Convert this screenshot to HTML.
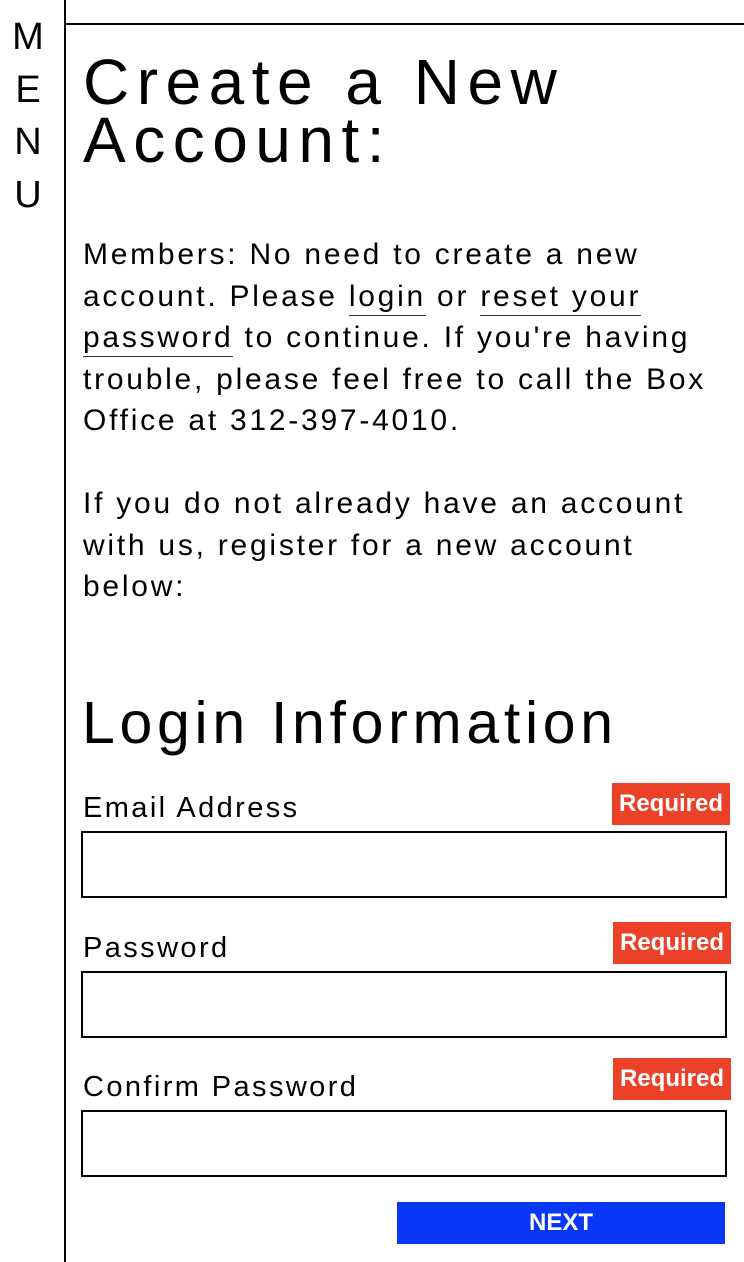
<!DOCTYPE html>
<html><head><meta charset="utf-8"><style>
*{margin:0;padding:0;box-sizing:border-box}
body{width:744px;height:1262px;background:#fff;position:relative;overflow:hidden;font-family:"Liberation Sans","DejaVu Sans",sans-serif;color:#000}
.a{position:absolute;white-space:nowrap}
.vl{left:64px;top:0;width:2px;height:1262px;background:#000}
.hl{left:64px;top:23px;width:680px;height:2px;background:#000}
.menu{left:8px;width:40px;text-align:center;font-size:38px;font-weight:300;line-height:38px}
.t{left:83px;font-size:64px;line-height:58px;letter-spacing:7.5px}
.p{left:83px;font-size:30px;line-height:41.5px;letter-spacing:2.75px}
.u{border-bottom:1px solid #333;padding-bottom:2px}
.lbl{left:83px;font-size:29px;letter-spacing:2.4px}
.req{background:#ea4128;color:#fff;font-weight:bold;font-size:24px;height:42px;line-height:42px;width:118px;text-align:center}
.in{left:81px;width:646px;height:67px;border:2px solid #000}
</style></head><body>
<div class="a vl"></div><div class="a hl"></div>
<div class="a menu" style="top:18px">M</div>
<div class="a menu" style="top:71px">E</div>
<div class="a menu" style="top:123px">N</div>
<div class="a menu" style="top:176px">U</div>
<div class="a t" style="top:53px">Create a New</div>
<div class="a t" style="top:111px">Account:</div>
<div class="a p" style="top:234px">Members: No need to create a new<br>account. Please <span class="u">login</span> or <span class="u">reset your</span><br><span class="u">password</span> to continue. If you're having<br>trouble, please feel free to call the Box<br>Office at 312-397-4010.</div>
<div class="a p" style="top:483px">If you do not already have an account<br>with us, register for a new account<br>below:</div>
<div class="a" style="left:82px;top:688px;font-size:59px;line-height:70px;letter-spacing:4.7px">Login Information</div>
<div class="a lbl" style="top:792px">Email Address</div>
<div class="a req" style="left:612px;top:783px">Required</div>
<div class="a in" style="top:831px"></div>
<div class="a lbl" style="top:932px">Password</div>
<div class="a req" style="left:613px;top:922px">Required</div>
<div class="a in" style="top:971px"></div>
<div class="a lbl" style="top:1071px">Confirm Password</div>
<div class="a req" style="left:613px;top:1058px">Required</div>
<div class="a in" style="top:1110px"></div>
<div class="a" style="left:397px;top:1202px;width:328px;height:42px;background:#0a36f5;color:#fff;font-weight:bold;font-size:24px;line-height:42px;text-align:center">NEXT</div>
</body></html>
